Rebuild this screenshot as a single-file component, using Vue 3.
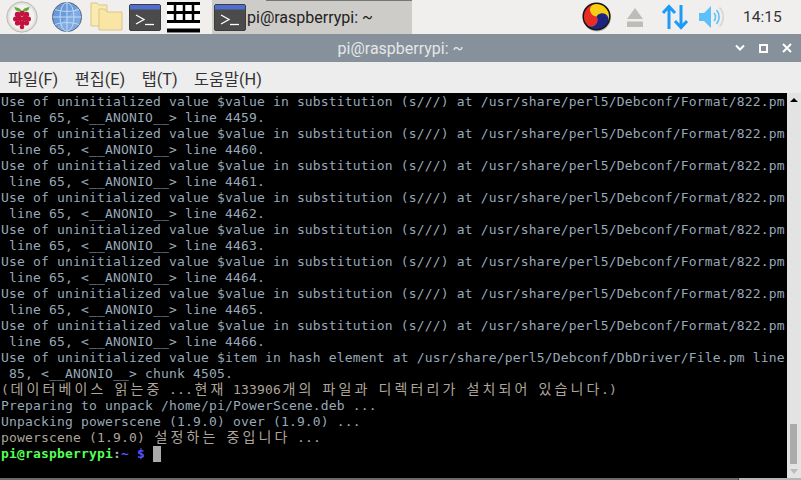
<script setup>
const wide = /[\u1100-\u11ff\u3130-\u318f\uac00-\ud7af]/

function cells(text) {
  const out = []
  let run = ''
  for (const ch of text) {
    if (wide.test(ch)) {
      if (run) out.push({ wide: false, text: run })
      run = ''
      out.push({ wide: true, text: ch })
    } else {
      run += ch
    }
  }
  if (run) out.push({ wide: false, text: run })
  return out
}

const raw = []
for (let n = 4459; n <= 4466; n++) {
  raw.push({ t: 'Use of uninitialized value $value in substitution (s///) at /usr/share/perl5/Debconf/Format/822.pm', c: 'blue' })
  raw.push({ t: ` line 65, <__ANONIO__> line ${n}.`, c: 'blue' })
}
raw.push({ t: 'Use of uninitialized value $item in hash element at /usr/share/perl5/Debconf/DbDriver/File.pm line', c: 'blue' })
raw.push({ t: ' 85, <__ANONIO__> chunk 4505.', c: 'blue' })
raw.push({ t: '(데이터베이스 읽는중 ...현재 133906개의 파일과 디렉터리가 설치되어 있습니다.)', c: 'warm' })
raw.push({ t: 'Preparing to unpack /home/pi/PowerScene.deb ...', c: 'blue' })
raw.push({ t: 'Unpacking powerscene (1.9.0) over (1.9.0) ...', c: 'blue' })
raw.push({ t: 'powerscene (1.9.0) 설정하는 중입니다 ...', c: 'warm' })

const lines = raw.map((l) => ({ cells: cells(l.t), c: l.c }))
const menus = ['파일(F)', '편집(E)', '탭(T)', '도움말(H)']
</script>

<template>
  <div class="screen">
    <header class="panel">
      <div class="launchers">
        <svg class="berry" width="32" height="32" viewBox="0 0 32 32">
          <defs>
            <radialGradient id="disc" cx=".5" cy=".5" r=".5">
              <stop offset=".75" stop-color="#f3f2f0" />
              <stop offset="1" stop-color="#d6d4d0" />
            </radialGradient>
          </defs>
          <circle cx="16" cy="16" r="15.2" fill="url(#disc)" stroke="#bdbbb7" />
          <path d="M15.5 9.5C13 6 10 7 8.5 5.5C8.5 9 11 11 15.5 10.5Z" fill="#5cae3c" />
          <path d="M16.5 9.5C19 6 22 7 23.5 5.5C23.5 9 21 11 16.5 10.5Z" fill="#5cae3c" />
          <g fill="#c4123f">
            <circle cx="16" cy="12.5" r="2.8" />
            <circle cx="11.5" cy="13.5" r="2.7" />
            <circle cx="20.5" cy="13.5" r="2.7" />
            <circle cx="9.5" cy="18" r="2.5" />
            <circle cx="22.5" cy="18" r="2.5" />
            <circle cx="13.5" cy="17.5" r="2.7" />
            <circle cx="18.5" cy="17.5" r="2.7" />
            <circle cx="11.5" cy="22" r="2.6" />
            <circle cx="20.5" cy="22" r="2.6" />
            <circle cx="16" cy="22" r="2.7" />
            <circle cx="16" cy="26" r="2.3" />
          </g>
        </svg>
        <svg class="globe" width="32" height="32" viewBox="0 0 32 32">
          <defs>
            <linearGradient id="sea" x1="0" y1="0" x2="1" y2="1">
              <stop offset="0" stop-color="#5f93d6" />
              <stop offset=".5" stop-color="#6d9fdc" />
              <stop offset=".5" stop-color="#82afe4" />
              <stop offset="1" stop-color="#77a6df" />
            </linearGradient>
          </defs>
          <circle cx="16" cy="16" r="14.6" fill="url(#sea)" stroke="#56667c" />
          <g fill="none" stroke="#c4d8f0" stroke-width="1">
            <ellipse cx="16" cy="16" rx="7" ry="14.4" />
            <path d="M16 1.5V30.5M1.5 16H30.5M4 8.5C11 11 21 11 28 8.5M4 23.5C11 21 21 21 28 23.5" />
          </g>
        </svg>
        <svg class="folder" width="33" height="30" viewBox="0 0 33 30">
          <path d="M1 1H7L9 3H17V24H1Z" fill="#faeaad" stroke="#d9c48f" />
          <path d="M9 7H15L17 10H32V28H9Z" fill="#fae6a4" stroke="#d9c48f" />
        </svg>
        <svg class="term" width="32" height="27" viewBox="0 0 32 27">
          <rect x=".5" y=".5" width="31" height="26" rx="1.5" fill="#4b4b4b" stroke="#3c3c3c" />
          <rect x="1" y="1" width="30" height="4.5" fill="#4f6fd0" />
          <path d="M7 11L15 15.5L7 20" fill="none" stroke="#fff" stroke-width="1.3" />
          <path d="M16 20.5H25" stroke="#fff" stroke-width="1.3" />
        </svg>
        <svg class="keys" width="33" height="31" viewBox="0 0 33 31">
          <rect width="33" height="31" fill="#fff" />
          <path d="M0 1.5H33M0 10.5H33M0 19.5H33" stroke="#000" stroke-width="3" />
          <path d="M0 28.5H33" stroke="#000" stroke-width="4" />
          <path d="M8 0V20M17 0V20M26 0V20" stroke="#000" stroke-width="2.5" />
        </svg>
      </div>
      <div class="task">
        <svg width="32" height="27" viewBox="0 0 32 27">
          <rect x=".5" y=".5" width="31" height="26" rx="1.5" fill="#4b4b4b" stroke="#3c3c3c" />
          <rect x="1" y="1" width="30" height="4.5" fill="#4f6fd0" />
          <path d="M7 11L15 15.5L7 20" fill="none" stroke="#fff" stroke-width="1.3" />
          <path d="M16 20.5H25" stroke="#fff" stroke-width="1.3" />
        </svg>
        <span>pi@raspberrypi: ~</span>
      </div>
      <div class="tray">
        <svg class="im" width="30" height="30" viewBox="0 0 30 30">
          <circle cx="15" cy="15.5" r="14" fill="#8a8a7a" opacity=".5" />
          <path d="M14.5 14.5A6.5 6.5 0 0 1 14.5 1.5A13 13 0 0 1 25.76 21A6.5 6.5 0 0 0 14.5 14.5Z" fill="#f7cf10" />
          <path d="M14.5 14.5A6.5 6.5 0 0 1 14.5 1.5A13 13 0 0 1 25.76 21A6.5 6.5 0 0 0 14.5 14.5Z" fill="#1c2480" transform="rotate(120 14.5 14.5)" />
          <path d="M14.5 14.5A6.5 6.5 0 0 1 14.5 1.5A13 13 0 0 1 25.76 21A6.5 6.5 0 0 0 14.5 14.5Z" fill="#ea2c24" transform="rotate(240 14.5 14.5)" />
          <circle cx="14.5" cy="14.5" r="13.3" fill="none" stroke="#151515" stroke-width="1.5" />
        </svg>
        <svg class="eject" width="18" height="21" viewBox="0 0 18 21">
          <path d="M9 1L17 12H1Z" fill="#bdbcb9" />
          <rect x="1" y="14.5" width="16" height="5.5" fill="#bdbcb9" />
        </svg>
        <svg class="net" width="26" height="26" viewBox="0 0 26 26">
          <path d="M7 25V3M1 9L7 2.5L13 9" fill="none" stroke="#1c9cf6" stroke-width="3" />
          <path d="M19 1V23M13 17L19 23.5L25 17" fill="none" stroke="#1c9cf6" stroke-width="3" />
        </svg>
        <svg class="vol" width="27" height="24" viewBox="0 0 27 24">
          <path d="M1 8H6L13 1V23L6 16H1Z" fill="#5cc0fa" />
          <path d="M16 8C18 10 18 14 16 16M18.5 5C22 9 22 15 18.5 19" fill="none" stroke="#5cc0fa" stroke-width="1.6" />
          <path d="M21.5 2.5C26.5 8 26.5 16 21.5 21.5" fill="none" stroke="#d5d5d5" stroke-width="1.6" />
        </svg>
        <span class="clock">14:15</span>
      </div>
    </header>

    <div class="titlebar">
      <span class="title">pi@raspberrypi: ~</span>
      <div class="controls">
        <svg width="10" height="8" viewBox="0 0 10 8"><path d="M1 1.5L5 5.5L9 1.5" fill="none" stroke="#fff" stroke-width="2" /></svg>
        <svg width="9" height="9" viewBox="0 0 9 9"><rect x="1" y="1" width="7" height="7" fill="none" stroke="#fff" stroke-width="2" /></svg>
        <svg width="10" height="10" viewBox="0 0 10 10"><path d="M1 1L9 9M9 1L1 9" fill="none" stroke="#fff" stroke-width="2" /></svg>
      </div>
    </div>

    <nav class="menubar">
      <span v-for="m in menus" :key="m">{{ m }}</span>
    </nav>

    <main class="body">
      <div class="terminal">
        <div v-for="(line, i) in lines" :key="i" class="line" :class="line.c">
          <template v-for="(cell, j) in line.cells" :key="j">
            <span v-if="cell.wide" class="wide">{{ cell.text }}</span>
            <span v-else>{{ cell.text }}</span>
          </template>
        </div>
        <div class="line prompt"><b class="user">pi@raspberrypi</b><b class="colon">:</b><b class="path">~ $</b> <i class="cursor"></i></div>
      </div>
      <div class="scrollbar">
        <span class="arrow up"></span>
        <span class="trough"><span class="thumb"></span></span>
        <span class="arrow down"></span>
      </div>
    </main>
    <div class="bottom">
      <span class="edge-left"></span>
      <span class="edge-tick"></span>
      <span class="edge-right"></span>
    </div>
  </div>
</template>

<style>
html, body { margin: 0; background: #000; }
</style>

<style scoped>
.screen { width: 801px; height: 480px; display: flex; flex-direction: column; overflow: hidden; font-family: Roboto, "Liberation Sans", "Noto Sans CJK KR", sans-serif; }
.panel { height: 34px; flex: none; background: #f0efee; display: flex; align-items: center; }
.launchers { display: flex; align-items: center; width: 212px; flex: none; padding-left: 6px; gap: 13px; box-sizing: border-box; }
.folder { margin-left: -6px; }
.term { margin-left: -7px; }
.keys { margin-left: -7px; }
.task { width: 200px; height: 34px; flex: none; background: #cdccc8; display: flex; align-items: center; gap: 1px; padding-left: 2px; box-sizing: border-box; font-size: 16px; color: #222; position: relative; }
.task::after { content: ""; position: absolute; left: 54px; right: 0; top: 0; height: 1px; background: #777; }
.tray { flex: 1; display: flex; align-items: center; padding-left: 170px; }
.im { margin-right: 14px; }
.eject { margin-right: 18px; }
.net { margin-right: 10px; }
.clock { margin-left: 18px; font-size: 15.5px; color: #333; }
.titlebar { height: 28px; flex: none; background: #87919b; position: relative; display: flex; align-items: center; justify-content: center; color: #e4e6e8; font-size: 16px; }
.controls { position: absolute; right: 9px; top: 9px; display: flex; gap: 14px; align-items: center; }
.menubar { height: 31px; flex: none; background: #eeeded; display: flex; align-items: center; gap: 16.5px; padding-left: 8px; font-size: 16.3px; color: #333; }
.body { flex: 1; display: flex; min-height: 0; }
.terminal { flex: 1; background: #000; font-family: "DejaVu Sans Mono", monospace; font-size: 13px; letter-spacing: .17px; line-height: 16px; padding-top: 1px; padding-left: 1px; overflow: hidden; }
.line { height: 16px; white-space: pre; }
.blue { color: #98a8b8; }
.warm { color: #aea59c; }
.wide { display: inline-block; width: 16px; height: 12px; line-height: 12px; text-align: center; letter-spacing: 0; font-family: "Noto Sans CJK KR", sans-serif; font-size: 14px; }
.user { color: #55ff55; }
.colon { color: #aaa; }
.path { color: #5555ff; }
.cursor { display: inline-block; width: 8px; height: 16px; background: #aaa; vertical-align: top; }
.scrollbar { width: 14px; background: #e3e3e3; display: flex; flex-direction: column; flex: none; }
.arrow { height: 14px; flex: none; display: flex; justify-content: center; align-items: center; }
.arrow.up::before { content: ""; border: 4px solid transparent; border-top: 0; border-bottom: 4px solid #000; }
.arrow.down::before { content: ""; border: 4px solid transparent; border-bottom: 0; border-top: 5px solid #bbb; }
.trough { flex: 1; position: relative; }
.thumb { position: absolute; left: 3px; right: 4px; bottom: 0; height: 40px; background: #ababab; }
.bottom { height: 2px; flex: none; display: flex; }
.edge-left { flex: 738; background: #6a6a6a; }
.edge-tick { width: 1px; background: #444; }
.edge-right { flex: 62; background: #b5b5b5; }
</style>
